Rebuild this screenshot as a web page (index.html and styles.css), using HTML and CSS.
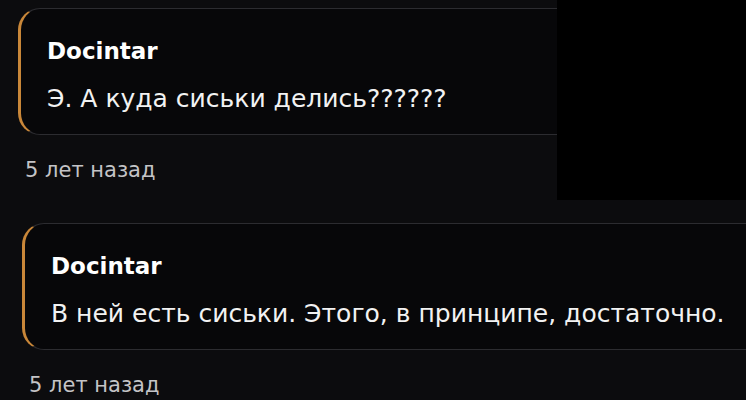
FILE: index.html
```html
<!DOCTYPE html>
<html lang="ru">
<head>
  <meta charset="UTF-8">
  <title>Комментарии</title>
  <link rel="stylesheet" href="styles.css">
</head>
<body>
  <div class="comments">
    <div class="comment">
      <div class="comment-box">
        <div class="comment-author">Docintar</div>
        <div class="comment-text">Э. А куда сиськи делись??????</div>
      </div>
      <div class="comment-date">5 лет назад</div>
    </div>
    <div class="comment">
      <div class="comment-box">
        <div class="comment-author">Docintar</div>
        <div class="comment-text">В ней есть сиськи. Этого, в принципе, достаточно.</div>
      </div>
      <div class="comment-date">5 лет назад</div>
    </div>
  </div>
  <div class="cover"></div>
</body>
</html>
```

FILE: styles.css
```css
body {
  margin: 0;
  height: 400px;
  overflow: hidden;
  background: #0c0c0e;
  font-family: "DejaVu Sans", "Noto Sans", sans-serif;
  color: #f2f2f2;
}
.comments {
  padding: 8px 0 0 18px;
}
.comment {
  width: 780px;
}
.comment + .comment {
  margin-top: 40px;
  margin-left: 4px;
}

/* карточка комментария */
.comment-box {
  box-sizing: border-box;
  height: 127px;
  padding: 27px 0 0 26px;
  border: 1px solid #2c2c30;
  border-left: 3px solid #c98739;
  border-radius: 22px;
  background: #070709;
}
.comment-author {
  font-size: 23px;
  font-weight: 700;
  line-height: 30px;
  color: #fff;
}
.comment-text {
  margin-top: 18px;
  font-size: 25px;
  line-height: 30px;
}
.comment-date {
  margin: 22px 0 0 7px;
  font-size: 21px;
  line-height: 26px;
  color: #c4c4c6;
}

/* чёрный блок справа сверху */
.cover {
  position: absolute;
  top: 0;
  right: 0;
  width: 189px;
  height: 200px;
  background: #000;
}
```
